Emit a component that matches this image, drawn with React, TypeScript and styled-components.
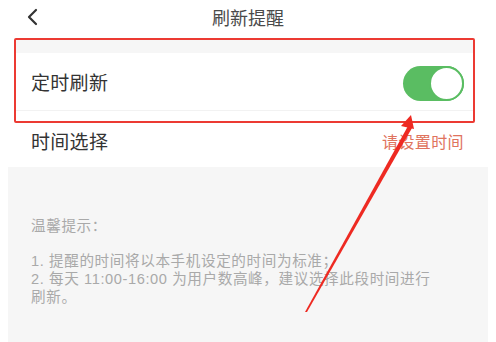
import React from "react";
import styled, { createGlobalStyle } from "styled-components";

const GlobalStyle = createGlobalStyle`
  html, body {
    margin: 0;
    padding: 0;
    background: #ffffff;
    font-family: "Noto Sans CJK SC", "Noto Sans", sans-serif;
  }
`;

const Page = styled.div`
  position: relative;
  width: 496px;
  height: 342px;
  overflow: hidden;
  background: #ffffff;
  display: flex;
  flex-direction: column;
`;

const Header = styled.div`
  height: 38px;
  display: grid;
  grid-template-columns: 60px 1fr 60px;
  align-items: center;
`;

const BackButton = styled.div`
  display: flex;
  align-items: center;
  padding-left: 26px;
  margin-top: -4px;
`;

const Title = styled.div`
  text-align: center;
  font-size: 18px;
  color: #4a4a4a;
  margin-top: -5px;
`;

const Highlight = styled.div`
  margin: 0 21px 0 14px;
  height: 85px;
  box-sizing: border-box;
  border: 2px solid #ec3a33;
  border-radius: 2px;
  display: flex;
  flex-direction: column;
`;

const Band = styled.div`
  height: 13px;
  background: #f6f6f6;
`;

const Row = styled.div<{ $line?: boolean }>`
  flex: 1;
  display: flex;
  align-items: center;
  justify-content: space-between;
  padding: 0 9px 0 15px;
  margin-bottom: 10px;
  border-bottom: ${(p) => (p.$line ? "1px solid #f2f2f2" : "none")};
`;

const Label = styled.div`
  font-size: 19px;
  color: #333333;
  letter-spacing: 0.3px;
`;

const Switch = styled.div`
  width: 61px;
  height: 35px;
  border-radius: 18px;
  background: #5abd62;
  display: flex;
  align-items: center;
  justify-content: flex-end;
  margin-top: 3px;
`;

const Knob = styled.div`
  width: 31px;
  height: 31px;
  border-radius: 50%;
  background: #ffffff;
  border: 2px solid #5abd62;
`;

const PlainRow = styled.div`
  height: 44px;
  box-sizing: border-box;
  display: flex;
  align-items: center;
  justify-content: space-between;
  padding: 0 32px 9px 31px;
`;

const Hint = styled.div`
  font-size: 16px;
  color: #e0735d;
  letter-spacing: 0.4px;
`;

const Tips = styled.div`
  flex: 1;
  margin: 0 8px;
  background: #f6f6f6;
  padding: 50px 20px 0 23px;
  color: #a9a9a9;
  font-family: "Liberation Sans", "Noto Sans CJK SC", sans-serif;
  font-size: 14.6px;
  line-height: 18px;
  letter-spacing: 0.6px;
`;

const TipsTitle = styled.div`
  margin-bottom: 17px;
`;

const TipLine = styled.div`
  white-space: nowrap;
`;

const Arrow = styled.svg`
  position: absolute;
  left: 0;
  top: 0;
  pointer-events: none;
`;

export default function App() {
  return (
    <Page>
      <GlobalStyle />
      <Header>
        <BackButton>
          <svg width="14" height="18" viewBox="0 0 14 18">
            <path d="M10 2 L3 9 L10 16" fill="none" stroke="#333" strokeWidth="2.2" strokeLinecap="round" strokeLinejoin="round" />
          </svg>
        </BackButton>
        <Title>刷新提醒</Title>
        <div />
      </Header>
      <Highlight>
        <Band />
        <Row $line>
          <Label>定时刷新</Label>
          <Switch>
            <Knob />
          </Switch>
        </Row>
      </Highlight>
      <PlainRow>
        <Label>时间选择</Label>
        <Hint>请设置时间</Hint>
      </PlainRow>
      <Tips>
        <TipsTitle>温馨提示：</TipsTitle>
        <TipLine>1. 提醒的时间将以本手机设定的时间为标准；</TipLine>
        <TipLine>2. 每天 11:00-16:00 为用户数高峰，建议选择此段时间进行</TipLine>
        <TipLine>刷新。</TipLine>
      </Tips>
      <Arrow width="496" height="342" viewBox="0 0 496 342">
        <polygon points="408,126 305,312 307,312 412,128" fill="#ee2a22" />
        <polygon points="411,115 401,126 414,129" fill="#ee2a22" />
      </Arrow>
    </Page>
  );
}
